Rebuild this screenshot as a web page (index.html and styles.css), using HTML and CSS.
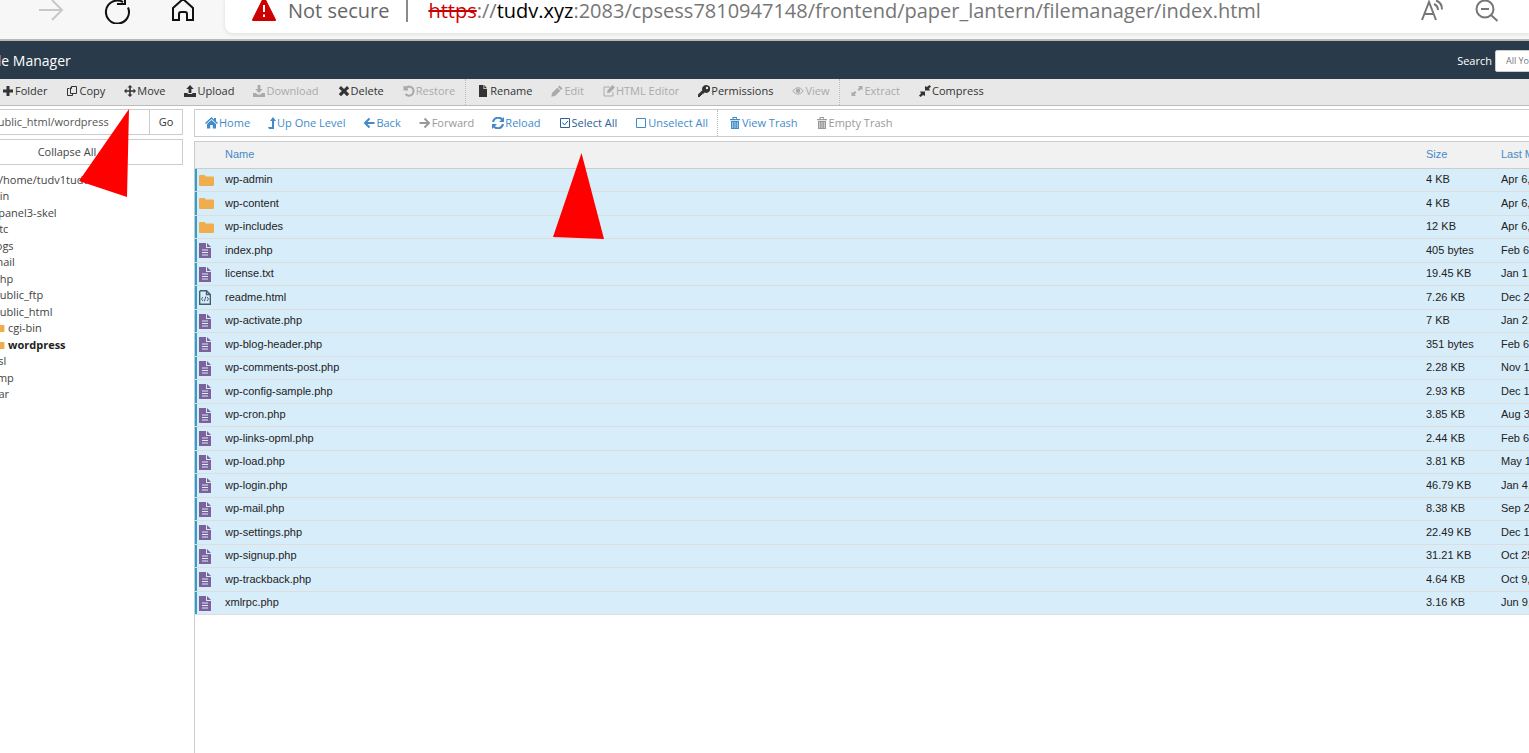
FILE: index.html
```
<!DOCTYPE html>
<html lang="en">
<head>
<meta charset="utf-8">
<title>File Manager</title>
<link rel="stylesheet" href="styles.css">
</head>
<body>
<svg class="defs" aria-hidden="true">
  <symbol id="plus" viewBox="0 0 12 12"><path d="M4.500 1h3v3.500h3.500v3H7.500V11h-3V7.500H1v-3h3.500z"/></symbol>
  <symbol id="copy" viewBox="0 0 12 12"><path class="line" d="M5.500 1.500h5v7h-6v-5.500zM5.500 1.500v2h-1.500M3.500 3.500h-2v7h5v-1.500"/></symbol>
  <symbol id="move" viewBox="0 0 12 12"><path d="M6 0l2.500 2.500H6.800v2.700h2.700V3.500L12 6 9.500 8.500V6.800H6.800v2.700h1.700L6 12 3.500 9.500h1.700V6.800H2.500v1.700L0 6l2.500-2.500v1.700h2.700V2.500H3.500z"/></symbol>
  <symbol id="upload" viewBox="0 0 12 12"><path d="M6 0l3.700 4H7.400v4H4.600V4H2.300zM0 8h3.700v1h4.600V8H12v4H0z"/></symbol>
  <symbol id="download" viewBox="0 0 12 12"><path d="M4.600 0h2.800v4h2.300L6 8 2.300 4h2.300zM0 8h3l1.500 1.500h3L9 8h3v4H0z"/></symbol>
  <symbol id="delete" viewBox="0 0 12 12"><path d="M3 1l3 3 3-3 2.200 2.200L8.200 6l3 3L9 11.200 6 8.200l-3 3L.8 9l3-3-3-2.800z"/></symbol>
  <symbol id="restore" viewBox="0 0 12 12"><path class="thick" d="M1.500 1v3.500H5M1.800 4.200C5-.5 11 2 10.500 6.500 10 11 5 12 2.500 9"/></symbol>
  <symbol id="file" viewBox="0 0 12 12"><path d="M2 0h4.500v4H10v8H2zM7.300 0L10 3.200H7.300z"/></symbol>
  <symbol id="pencil" viewBox="0 0 12 12"><path d="M8.500.5l3 3L10 5 7 2zM6.300 2.700l3 3L4 11l-3.700.7L1 8z"/></symbol>
  <symbol id="compose" viewBox="0 0 12 12"><path class="line" d="M7 2H1v9h9V7"/><path d="M9.500 0L12 2.500 7 7.500l-3 .7.700-3z"/></symbol>
  <symbol id="key" viewBox="0 0 12 12"><path fill-rule="evenodd" d="M8 0a4 4 0 11-1.500 7.600L5.500 8.700H4.200v1.200H3V11H2v1H0V9.500l4.300-4.200A4 4 0 018 0zm1 1.800a1.200 1.200 0 100 2.400 1.200 1.200 0 000-2.400z"/></symbol>
  <symbol id="eye" viewBox="0 0 12 12"><path class="line" d="M.7 6Q6-.8 11.300 6 6 12.500.7 6z"/><circle cx="6" cy="5.700" r="2.300"/></symbol>
  <symbol id="expand" viewBox="0 0 12 12"><path d="M7 1h4.500v4.500L10 4 8 6 6.500 4.500l2-2zM.5 6.500L2 8l2-2 1.500 1.500-2 2L5 11H.5z"/></symbol>
  <symbol id="compress" viewBox="0 0 12 12"><path d="M10.500 0L12 1.500l-2 2L11 5.500H6V1L8 2zM1 6.500h5v4.500L4 10l-2.500 2L0 10.500l2-2z"/></symbol>
  <symbol id="home" viewBox="0 0 13 12"><path d="M6.500 0L9 2.400V1h2v3.200L13 6l-1 1-5.500-5L1 7 0 6z"/><path d="M2 7l4.500-4L11 7v4.500H7.800V8H5.200v3.500H2z"/></symbol>
  <symbol id="levelup" viewBox="0 0 8 12"><path d="M5 0l3 4H6v8H1L0 10h4V4H2z"/></symbol>
  <symbol id="back" viewBox="0 0 12 12"><path class="thick" d="M11.500 6h-10M6.500 1.500L2 6l4.500 4.500"/></symbol>
  <symbol id="forward" viewBox="0 0 12 12"><path class="thick" d="M.5 6h10M5.500 1.500L10 6l-4.500 4.500"/></symbol>
  <symbol id="reload" viewBox="0 0 12 12"><path class="thick" d="M1 5c1-5 7-5.500 9.500-2.200M11 7c-1 5-7 5.500-9.500 2.200"/><path d="M12 0v5H7zM0 12V7h5z"/></symbol>
  <symbol id="checked" viewBox="0 0 12 12"><path class="line" d="M1.500 1.500h9v9h-9z"/><path class="line" d="M3.500 5.500l2 2.500L9 4"/></symbol>
  <symbol id="unchecked" viewBox="0 0 12 12"><path class="line" d="M1.500 1.500h9v9h-9z"/></symbol>
  <symbol id="trash" viewBox="0 0 12 12"><path fill-rule="evenodd" d="M1 2h2.500V0h4.500v2H11v1.300H1zM4.500 1v1h2.700V1zM2 4h8v8H2zm1.500 1v6h.6V5zm2.200 0v6h.6V5zm2.200 0v6h.6V5z"/></symbol>
  <symbol id="folder" viewBox="0 0 15 11"><path d="M1 0h4.500l1.500 1.500h7a1 1 0 011 1V10a1 1 0 01-1 1H1a1 1 0 01-1-1V1a1 1 0 011-1z"/></symbol>
  <symbol id="doc" viewBox="0 0 12 15"><path fill-rule="evenodd" d="M0 0h7v5h5v10H0zM8 0l4 4H8zM3 6.500v1h6v-1zm0 2.500v1h6V9zm0 2.500v1h6v-1z"/></symbol>
  <symbol id="code" viewBox="0 0 12 15"><path class="outline" d="M1 .7h6.500L11.300 4.500v9.800H.7V.7M7.500 1v3.500h3.500"/><path class="line" d="M4 7L2.500 9 4 11M8 7l1.500 2L8 11M6.800 6.500l-1.500 5"/></symbol>
</svg>

<header class="browser">
  <div class="browser-nav">
    <button aria-label="Forward" disabled><svg width="28" height="28" viewBox="0 0 28 28"><path class="hair" d="M2 14h23M15 4l10 10-10 10"/></svg></button>
    <button aria-label="Reload"><svg width="28" height="28" viewBox="0 0 28 28"><path class="ink" d="M25 11.500a11.500 11.500 0 11-5-5.500M22 0v8h-8"/></svg></button>
    <button aria-label="Home"><svg width="28" height="28" viewBox="0 0 28 28"><path class="ink" d="M4 12L14 3l10 9v12h-6v-6q0-2-2-2h-4q-2 0-2 2v6H4z"/></svg></button>
  </div>
  <div class="address">
    <svg width="24" height="24" viewBox="0 0 24 24"><path fill="#c00" stroke="#c00" stroke-width="2" stroke-linejoin="round" d="M12 1l11 22H1z"/><path class="bang" d="M12 8v7M12 17.500v2.500"/></svg>
    <span class="insecure">Not secure</span>
    <span class="url"><s>https</s>://<b>tudv.xyz</b>:2083/cpsess7810947148/frontend/paper_lantern/filemanager/index.html</span>
    <div class="address-tools">
      <button aria-label="Read aloud"><svg width="28" height="28" viewBox="0 0 28 28"><path class="grey" d="M3 24l7-18 7 18M5.500 18h9M15 8q4 2 4 6M17 4.500q6 2 6 9"/></svg></button>
      <button aria-label="Zoom out"><svg width="28" height="28" viewBox="0 0 28 28"><path class="grey" d="M3.500 13a8.500 8.500 0 1017 0 8.500 8.500 0 00-17 0M8 13h8M18 19l6.500 6"/></svg></button>
    </div>
  </div>
</header>

<div class="topbar">
  <h1>File Manager</h1>
  <label for="scope">Search</label>
  <select id="scope"><option>All Your Files</option></select>
</div>

<div class="toolbar">
  <button><svg><use href="#plus"/></svg>Folder</button>
  <button><svg><use href="#copy"/></svg>Copy</button>
  <button><svg><use href="#move"/></svg>Move</button>
  <button><svg><use href="#upload"/></svg>Upload</button>
  <button disabled><svg><use href="#download"/></svg>Download</button>
  <button><svg><use href="#delete"/></svg>Delete</button>
  <button disabled><svg><use href="#restore"/></svg>Restore</button>
  <i class="sep"></i>
  <button><svg><use href="#file"/></svg>Rename</button>
  <button disabled><svg><use href="#pencil"/></svg>Edit</button>
  <button disabled><svg><use href="#compose"/></svg>HTML Editor</button>
  <button><svg><use href="#key"/></svg>Permissions</button>
  <button disabled><svg><use href="#eye"/></svg>View</button>
  <i class="sep"></i>
  <button disabled><svg><use href="#expand"/></svg>Extract</button>
  <button><svg><use href="#compress"/></svg>Compress</button>
</div>

<div class="workspace">
  <aside class="sidebar">
    <form class="path"><input aria-label="Path" value="public_html/wordpress"><button type="button">Go</button></form>
    <button class="collapse">Collapse All</button>
    <ul class="tree">
      <li class="root">/home/tudv1tudv</li>
      <li>bin</li>
      <li>cpanel3-skel</li>
      <li>etc</li>
      <li>logs</li>
      <li>mail</li>
      <li>php</li>
      <li>public_ftp</li>
      <li>public_html</li>
      <li class="child"><svg><use href="#folder"/></svg>cgi-bin</li>
      <li class="child current"><svg><use href="#folder"/></svg>wordpress</li>
      <li>ssl</li>
      <li>tmp</li>
      <li>var</li>
    </ul>
  </aside>
  <main class="files">
    <div class="actions">
      <button><svg class="wide"><use href="#home"/></svg>Home</button>
      <button><svg class="narrow"><use href="#levelup"/></svg>Up One Level</button>
      <button><svg><use href="#back"/></svg>Back</button>
      <button disabled><svg><use href="#forward"/></svg>Forward</button>
      <button><svg><use href="#reload"/></svg>Reload</button>
      <button class="hover"><svg><use href="#checked"/></svg>Select All</button>
      <button><svg><use href="#unchecked"/></svg>Unselect All</button>
      <i class="sep"></i>
      <button><svg><use href="#trash"/></svg>View Trash</button>
      <button disabled><svg><use href="#trash"/></svg>Empty Trash</button>
    </div>
    <table class="list">
      <colgroup><col class="c-icon"><col><col class="c-size"><col class="c-date"></colgroup>
      <thead><tr><th></th><th>Name</th><th>Size</th><th>Last Modified</th></tr></thead>
      <tbody>
        <tr><td><svg class="folder"><use href="#folder"/></svg></td><td>wp-admin</td><td>4 KB</td><td>Apr 6,</td></tr>
        <tr><td><svg class="folder"><use href="#folder"/></svg></td><td>wp-content</td><td>4 KB</td><td>Apr 6,</td></tr>
        <tr><td><svg class="folder"><use href="#folder"/></svg></td><td>wp-includes</td><td>12 KB</td><td>Apr 6,</td></tr>
        <tr><td><svg class="doc"><use href="#doc"/></svg></td><td>index.php</td><td>405 bytes</td><td>Feb 6</td></tr>
        <tr><td><svg class="doc"><use href="#doc"/></svg></td><td>license.txt</td><td>19.45 KB</td><td>Jan 1,</td></tr>
        <tr><td><svg class="code"><use href="#code"/></svg></td><td>readme.html</td><td>7.26 KB</td><td>Dec 2</td></tr>
        <tr><td><svg class="doc"><use href="#doc"/></svg></td><td>wp-activate.php</td><td>7 KB</td><td>Jan 21</td></tr>
        <tr><td><svg class="doc"><use href="#doc"/></svg></td><td>wp-blog-header.php</td><td>351 bytes</td><td>Feb 6</td></tr>
        <tr><td><svg class="doc"><use href="#doc"/></svg></td><td>wp-comments-post.php</td><td>2.28 KB</td><td>Nov 1</td></tr>
        <tr><td><svg class="doc"><use href="#doc"/></svg></td><td>wp-config-sample.php</td><td>2.93 KB</td><td>Dec 1</td></tr>
        <tr><td><svg class="doc"><use href="#doc"/></svg></td><td>wp-cron.php</td><td>3.85 KB</td><td>Aug 3</td></tr>
        <tr><td><svg class="doc"><use href="#doc"/></svg></td><td>wp-links-opml.php</td><td>2.44 KB</td><td>Feb 6</td></tr>
        <tr><td><svg class="doc"><use href="#doc"/></svg></td><td>wp-load.php</td><td>3.81 KB</td><td>May 1</td></tr>
        <tr><td><svg class="doc"><use href="#doc"/></svg></td><td>wp-login.php</td><td>46.79 KB</td><td>Jan 4,</td></tr>
        <tr><td><svg class="doc"><use href="#doc"/></svg></td><td>wp-mail.php</td><td>8.38 KB</td><td>Sep 2</td></tr>
        <tr><td><svg class="doc"><use href="#doc"/></svg></td><td>wp-settings.php</td><td>22.49 KB</td><td>Dec 1</td></tr>
        <tr><td><svg class="doc"><use href="#doc"/></svg></td><td>wp-signup.php</td><td>31.21 KB</td><td>Oct 25</td></tr>
        <tr><td><svg class="doc"><use href="#doc"/></svg></td><td>wp-trackback.php</td><td>4.64 KB</td><td>Oct 9,</td></tr>
        <tr><td><svg class="doc"><use href="#doc"/></svg></td><td>xmlrpc.php</td><td>3.16 KB</td><td>Jun 9,</td></tr>
      </tbody>
    </table>
  </main>
</div>

<svg class="pointer pointer-move" viewBox="0 0 50 88" aria-hidden="true"><path d="M50 0L48 88 0 72z"/></svg>
<svg class="pointer pointer-select" viewBox="0 0 51 86" aria-hidden="true"><path d="M28.500 0L51 86 0 84z"/></svg>
</body>
</html>
```
FILE: styles.css
```
* { box-sizing: border-box; }
html, body { height: 100%; }
body {
  margin: 0;
  display: flex;
  flex-direction: column;
  overflow: hidden;
  position: relative;
  background: #fff;
  color: #333;
  font: 11px/16px "Open Sans", sans-serif;
}
button, input, select { font: inherit; color: inherit; margin: 0; }
button { border: 0; padding: 0; background: none; white-space: nowrap; }
svg { flex: none; fill: currentColor; }
.defs { display: none; }
.line, .outline { fill: none; stroke: currentColor; stroke-width: 1; }
.thick { fill: none; stroke: currentColor; stroke-width: 2; }
.outline { stroke-width: 1.4; }
.hair, .ink, .grey { fill: none; stroke-width: 2; }
.hair { stroke: #c8c8c8; }
.ink { stroke: #111; }
.grey { stroke: #767676; }
.bang { fill: none; stroke: #fff; stroke-width: 2; }

.browser {
  flex: none;
  height: 41px;
  display: flex;
  align-items: flex-start;
  background: #f7f7f7;
  border-bottom: 2px solid #bbb9b7;
}
.browser-nav { display: flex; gap: 38px; width: 225px; padding-left: 37px; }
.browser-nav button, .address-tools button { height: 24px; width: 28px; display: flex; align-items: flex-end; }
.address {
  flex: 1;
  min-width: 0;
  height: 33px;
  display: flex;
  align-items: flex-start;
  padding-left: 27px;
  background: #fff;
  border-radius: 0 0 0 8px;
  box-shadow: 0 1px 4px #ddd;
  font: 20px/22px "Open Sans", sans-serif;
  color: #767676;
  white-space: nowrap;
}
.address > svg { margin-top: -3px; }
.insecure { margin-left: 12px; padding-right: 17px; border-right: 2px solid #8a8a8a; color: #666; }
.url { margin-left: 20px; }
.url s { color: #c00; }
.url b { color: #000; font-weight: 400; }
.address-tools { display: flex; gap: 26px; margin-left: auto; padding-right: 28px; }

.topbar {
  flex: none;
  height: 38px;
  display: flex;
  align-items: center;
  padding-top: 2px;
  overflow: hidden;
  background: #293a4a;
  color: #fff;
}
.topbar h1 { margin: 0 auto 0 -13px; font-size: 14px; font-weight: 400; }
.topbar select {
  width: 120px;
  height: 22px;
  margin: 0 -86px 0 3px;
  padding: 0 10px;
  border: 1px solid #ccc;
  border-radius: 2px;
  appearance: none;
  background: #fff;
  color: #777;
  font-size: 9px;
}

.toolbar {
  flex: none;
  display: flex;
  height: 27px;
  padding-bottom: 2px;
  background: #e8e8e8;
  border-bottom: 1px solid #bbb;
}
.toolbar button, .actions button { display: flex; align-items: center; gap: 1px; padding: 0 9px 0 10px; }
.toolbar button:first-child { padding-left: 2px; }
.toolbar svg, .actions svg { width: 12px; height: 12px; }
.actions button { padding-right: 8px; }
.actions .narrow { width: 8px; }
.actions .wide { width: 13px; }
.toolbar :disabled { color: #aaa; }
.sep { border-left: 1px dotted #bbb; margin: 0 1px; }
.toolbar .sep { margin: 0 1px -2px; }

.workspace { flex: 1; display: flex; gap: 11px; min-height: 0; padding-top: 3px; overflow: hidden; }
.sidebar { width: 183px; flex: none; }
.path { display: flex; height: 26px; border: 1px solid #ccc; border-left: 0; }
.path input { flex: 1; min-width: 0; border: 0; padding: 0; text-indent: -9px; color: #555; }
.path button { width: 33px; border-left: 1px solid #ccc; }
.collapse { width: 100%; height: 26px; margin-top: 4px; padding-right: 48px; border: 1px solid #ccc; border-left: 0; color: #444; }
.tree { list-style: none; margin: 6px 0 0 -7px; padding: 0; color: #444; }
.tree li { height: 16px; display: flex; align-items: center; white-space: nowrap; }
.tree li:nth-child(odd) { height: 17px; }
.tree .root { padding-left: 6px; }
.tree .child { gap: 3px; }
.tree .child svg { width: 12px; height: 8px; color: #f0ad4e; }
.tree .current { color: #222; font-weight: 700; }

.files { flex: 1; min-width: 0; display: flex; flex-direction: column; }
.files::after { content: ""; flex: 1; border-left: 1px solid #ccc; }
.actions {
  display: flex;
  flex: none;
  height: 28px;
  border: 1px solid #ccc;
  border-right: 0;
  color: #428bca;
}
.actions :disabled { color: #999; }
.actions .hover { color: #2a5f94; }
.list {
  width: 100%;
  margin-top: 4px;
  border-collapse: separate;
  border-spacing: 0;
  table-layout: fixed;
  font: 11px/16px "Liberation Sans", Arial, sans-serif;
  color: #222;
}
.c-icon { width: 31px; }
.c-size { width: 75px; }
.c-date { width: 28px; }
.list th, .list td { padding: 0 0 2px; text-align: left; white-space: nowrap; overflow: hidden; }
.list th { height: 28px; border: solid #ccc; border-width: 1px 0; background: #f1f1f1; color: #428bca; font-weight: 400; }
.list th:first-child { border-left-width: 1px; }
.list td { height: 23px; border-bottom: 1px solid #ddd; background: #d8edfa; }
.list tr:nth-child(even) td { height: 24px; }
.list td:first-child { border-left: 1px solid #ccc; padding: 0 0 0 4px; box-shadow: inset 2px 0 #2f9fd0; }
.list td svg { display: block; }
.folder { width: 15px; height: 11px; color: #f0ad4e; }
.doc, .code { width: 12px; height: 15px; }
.doc { color: #7d619b; }
.code { color: #44606f; }

.pointer { position: absolute; fill: #f00; pointer-events: none; }
.pointer-move { left: 79px; top: 109px; width: 50px; height: 88px; }
.pointer-select { left: 553px; top: 153px; width: 51px; height: 86px; }
```
